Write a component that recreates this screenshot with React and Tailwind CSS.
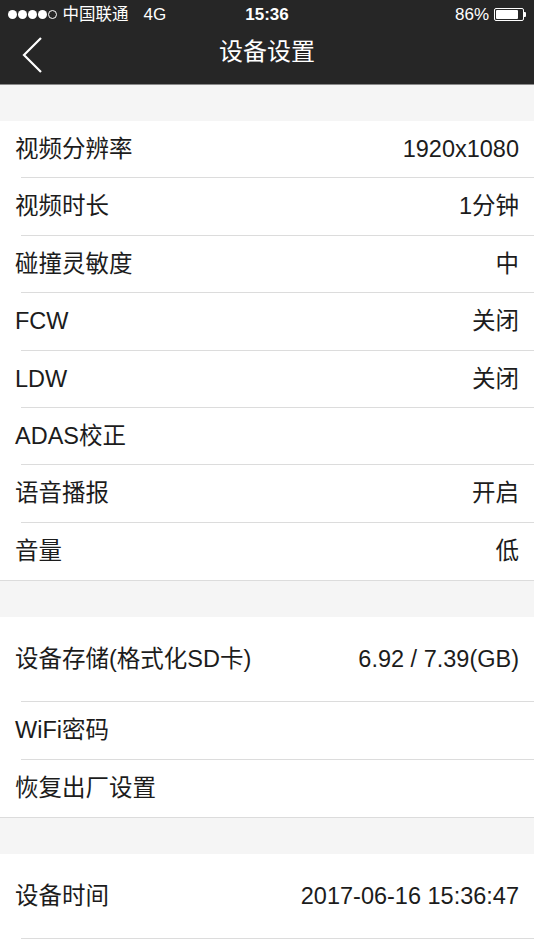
const FONT = { fontFamily: '"Liberation Sans", "Noto Sans CJK SC", sans-serif' };

const groups = [
  [
    { label: '视频分辨率', value: '1920x1080' },
    { label: '视频时长', value: '1分钟' },
    { label: '碰撞灵敏度', value: '中' },
    { label: 'FCW', value: '关闭' },
    { label: 'LDW', value: '关闭' },
    { label: 'ADAS校正', value: '' },
    { label: '语音播报', value: '开启' },
    { label: '音量', value: '低' },
  ],
  [
    { label: '设备存储(格式化SD卡)', value: '6.92 / 7.39(GB)', tall: true },
    { label: 'WiFi密码', value: '' },
    { label: '恢复出厂设置', value: '' },
  ],
];

function Row({ label, value, tall, last }) {
  return (
    <div className={`relative flex items-center justify-between px-[15px] ${tall ? 'h-[85px]' : 'h-[57.4px]'}`}>
      <span className="text-[23.5px] text-[#1c1c1c]">{label}</span>
      <span className="text-[23.5px] text-[#1c1c1c]">{value}</span>
      {!last && <div className="absolute left-[21px] right-0 bottom-0 h-px bg-[#dcdcdc]" />}
    </div>
  );
}

export default function App() {
  return (
    <div className="w-[534px] h-[950px] bg-[#f5f5f5] overflow-hidden" style={FONT}>
      {/* status + nav */}
      <div className="bg-[#262626] text-white border-b border-[#8a8a8a]">
        <div className="relative h-[29px] flex items-center px-[8px] text-[16px]">
          <div className="flex items-center gap-[1.5px]">
            {[0, 1, 2, 3].map((i) => (
              <div key={i} className="w-[8.5px] h-[8.5px] rounded-full bg-white" />
            ))}
            <div className="w-[8.5px] h-[8.5px] rounded-full border border-white" />
          </div>
          <span className="ml-[6px] text-[16.5px]">中国联通</span>
          <span className="ml-[15px] text-[17px]">4G</span>
          <span className="absolute left-1/2 -translate-x-1/2 font-bold text-[17px]">15:36</span>
          <div className="ml-auto flex items-center gap-[5px]">
            <span className="text-[17px]">86%</span>
            <div className="flex items-center">
              <div className="w-[30px] h-[13px] border border-white rounded-[2px] p-[1px]">
                <div className="w-[86%] h-full bg-white rounded-[1px]" />
              </div>
              <div className="w-[2px] h-[5px] bg-white rounded-r-[1px]" />
            </div>
          </div>
        </div>
        <div className="relative h-[55px] flex items-center justify-center pb-[10px]">
          <svg className="absolute left-[20px] top-[7px]" width="26" height="38" viewBox="0 0 26 38">
            <path d="M21 2 L4 19 L21 36" fill="none" stroke="white" strokeWidth="2.2" />
          </svg>
          <span className="text-[24px]">设备设置</span>
        </div>
      </div>

      {groups.map((g, gi) => (
        <div key={gi} className="mt-[36px] bg-white border-b border-[#dcdcdc]">
          {g.map((r, i) => (
            <Row key={r.label} {...r} last={i === g.length - 1} />
          ))}
        </div>
      ))}

      <div className="mt-[36px] bg-white h-[100px]">
        <Row label="设备时间" value="2017-06-16 15:36:47" tall />
      </div>
    </div>
  );
}
